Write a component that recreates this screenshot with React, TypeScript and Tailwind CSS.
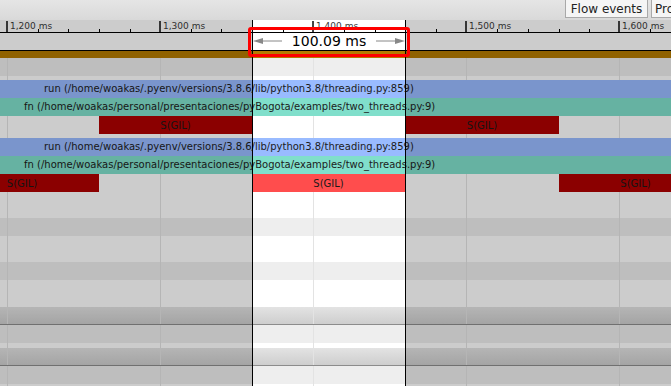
import React from 'react';

// trace viewer: a zoomed timeline with a 100 ms range selected

const MAJORS = [
  { x: 7, label: '1,200 ms' },
  { x: 160, label: '1,300 ms' },
  { x: 313, label: '1,400 ms' },
  { x: 466, label: '1,500 ms' },
  { x: 619, label: '1,600 ms' },
];
const GRID = MAJORS.map(m => m.x);
const MINORS: number[] = [];
for (let i = -1; i < 24; i++) {
  if (i % 5 !== 0) MINORS.push(Math.round(7 + i * 30.64));
}

interface Slice {
  left: number;
  width: number;
  color: string;
  label: string;
}

const GIL_A: Slice[] = [
  { left: 99, width: 153, color: 'bg-[#ae0000]', label: 'S(GIL)' },
  { left: 405, width: 154, color: 'bg-[#ae0000]', label: 'S(GIL)' },
];
const GIL_B: Slice[] = [
  { left: -55, width: 154, color: 'bg-[#ae0000]', label: 'S(GIL)' },
  { left: 252, width: 153, color: 'bg-[#ff4d4d]', label: 'S(GIL)' },
  { left: 559, width: 153, color: 'bg-[#ae0000]', label: 'S(GIL)' },
];

function GridLines() {
  return (
    <>
      {GRID.map(x => (
        <div key={x} className="absolute top-0 bottom-0 w-px bg-[#e3e3e3]" style={{ left: x }} />
      ))}
    </>
  );
}

function Band({ h, bg = 'bg-white' }: { h: string; bg?: string }) {
  return (
    <div className={`relative ${h} ${bg}`}>
      <GridLines />
    </div>
  );
}

function TrackHeader() {
  return (
    <>
      <div className="relative h-[17px] bg-gradient-to-b from-[#e3e3e3] to-[#cecece]">
        <GridLines />
      </div>
      <div className="h-px bg-[#8c8c8c]" />
    </>
  );
}

function CallBar({ kind, label, textLeft }: { kind: 'run' | 'fn'; label: string; textLeft: string }) {
  return (
    <div className={`relative h-[18px] ${kind === 'run' ? 'bg-[#99bbff]' : 'bg-[#80dfcb]'}`}>
      <span className={`absolute top-0 ${textLeft} whitespace-nowrap text-[10px] leading-[18px] text-[#1c1c1c]`}>
        {label}
      </span>
    </div>
  );
}

function GilRow({ slices }: { slices: Slice[] }) {
  return (
    <div className="relative h-[18px] bg-white">
      <GridLines />
      {slices.map(s => (
        <div
          key={s.left}
          className={`absolute top-0 h-[18px] ${s.color} flex items-center justify-center text-[10px] text-[#1a1a1a]`}
          style={{ left: s.left, width: s.width }}
        >
          {s.label}
        </div>
      ))}
    </div>
  );
}

const RUN = 'run (/home/woakas/.pyenv/versions/3.8.6/lib/python3.8/threading.py:859)';
const FN = 'fn (/home/woakas/personal/presentaciones/pyBogota/examples/two_threads.py:9)';

export default function App() {
  return (
    <div className="relative w-[671px] h-[386px] overflow-hidden bg-white font-['DejaVu_Sans',sans-serif]">
      {/* toolbar */}
      <div className="h-[20px] bg-gradient-to-b from-[#e5e5e5] to-[#d9d9d9] flex justify-end items-start gap-[3px]">
        <button className="-mt-px h-[19px] w-[83px] border border-[#a9a9a9] bg-[#f5f5f5] text-[12px] leading-[16px] text-[#222]">
          Flow events
        </button>
        <button className="-mt-px -mr-[44px] h-[19px] w-[64px] pl-[3px] text-left border border-[#a9a9a9] bg-[#f5f5f5] text-[12px] leading-[16px] text-[#222] overflow-hidden whitespace-nowrap">
          Pro
        </button>
      </div>

      {/* ruler */}
      <div className="relative h-[13px] border-b border-black bg-white">
        {MAJORS.map(m => (
          <React.Fragment key={m.x}>
            <div className="absolute top-[1px] bottom-0 w-[2px] bg-[#444]" style={{ left: m.x - 1 }} />
            <span
              className="absolute top-[1px] text-[9px] leading-[10px] text-[#3a3a3a] whitespace-nowrap"
              style={{ left: m.x + 3 }}
            >
              {m.label}
            </span>
          </React.Fragment>
        ))}
        {MINORS.map(x => (
          <div key={x} className="absolute bottom-0 h-[3px] w-px bg-black" style={{ left: x }} />
        ))}
      </div>

      {/* selection strip */}
      <div className="h-[18px] border-b border-black bg-white" />
      <div className="h-[7px] bg-[#b57b00]" />

      {/* tracks */}
      <div className="flex flex-col">
        <Band h="h-[18px]" bg="bg-[#eeeeee]" />
        <Band h="h-[4px]" />
        <CallBar kind="run" label={RUN} textLeft="left-[44px]" />
        <CallBar kind="fn" label={FN} textLeft="left-[24px]" />
        <GilRow slices={GIL_A} />
        <Band h="h-[4px]" />
        <CallBar kind="run" label={RUN} textLeft="left-[44px]" />
        <CallBar kind="fn" label={FN} textLeft="left-[24px]" />
        <GilRow slices={GIL_B} />
        <Band h="h-[26px]" />
        <Band h="h-[18px]" bg="bg-[#eeeeee]" />
        <Band h="h-[26px]" />
        <Band h="h-[18px]" bg="bg-[#eeeeee]" />
        <Band h="h-[27px]" />
        <TrackHeader />
        <Band h="h-[18px]" bg="bg-[#eeeeee]" />
        <Band h="h-[5px]" />
        <TrackHeader />
        <Band h="h-[18px]" bg="bg-[#eeeeee]" />
        <Band h="h-[10px]" />
      </div>

      {/* shading outside the selected range */}
      <div className="absolute left-0 top-[20px] bottom-0 w-[252px] bg-black/20" />
      <div className="absolute left-[406px] right-0 top-[20px] bottom-0 bg-black/20" />
      <div className="absolute left-[252px] top-[20px] bottom-0 w-px bg-black" />
      <div className="absolute left-[405px] top-[20px] bottom-0 w-px bg-black" />

      {/* duration label */}
      <div className="absolute left-[248px] top-[27px] w-[162px] h-[30px] border-[3px] border-[#ff0000] rounded-[3px]" />
      <div className="absolute left-[253px] top-[32px] w-[152px] h-[18px] flex items-center justify-between">
        <svg width="30" height="10" viewBox="0 0 30 10">
          <line x1="6" y1="5" x2="29" y2="5" stroke="#888" strokeWidth="1" />
          <polygon points="0,5 10,2 10,8" fill="#888" />
        </svg>
        <span className="text-[14px] leading-[18px] text-black">100.09 ms</span>
        <svg width="30" height="10" viewBox="0 0 30 10">
          <line x1="1" y1="5" x2="24" y2="5" stroke="#888" strokeWidth="1" />
          <polygon points="30,5 20,2 20,8" fill="#888" />
        </svg>
      </div>
    </div>
  );
}
